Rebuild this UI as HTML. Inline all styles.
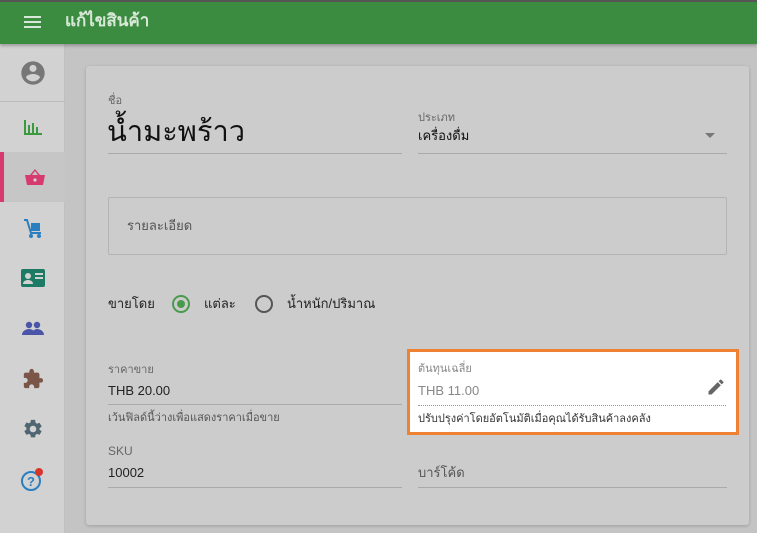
<!DOCTYPE html>
<html><head><meta charset="utf-8"><style>
*{margin:0;padding:0;box-sizing:border-box}
body{width:757px;height:533px;overflow:hidden;background:#c4c4c4;font-family:"Liberation Sans","Noto Sans CJK SC",sans-serif;position:relative;color:#222}
.hdr{position:absolute;left:0;top:0;width:757px;height:44px;background:#3b8c40;border-top:2px solid #555;box-shadow:0 2px 3px rgba(0,0,0,.25);z-index:2}
.hdr .t{position:absolute;left:65px;top:5px;color:#d8e8d8;font-size:17px;font-weight:bold}
.side{position:absolute;left:0;top:44px;width:65px;height:489px;background:#d2d2d2;border-right:1px solid #c0c0c0}
.ic{position:absolute;left:0;width:65px;height:50px;display:flex;align-items:center;justify-content:center}
.card{position:absolute;left:86px;top:66px;width:663px;height:459px;background:#cccccc;border-radius:3px;box-shadow:0 1px 3px rgba(0,0,0,.2)}
.a{position:absolute;white-space:nowrap}
.lbl{font-size:11px;color:#666}
.line{position:absolute;height:1px;background:#aaa}
</style></head><body>
<div class="hdr">
<svg style="position:absolute;left:24px;top:13px" width="17" height="14"><rect y="1" width="17" height="2" fill="#d8e8d8"/><rect y="6" width="17" height="2" fill="#d8e8d8"/><rect y="11" width="17" height="2" fill="#d8e8d8"/></svg>
<div class="t">แก้ไขสินค้า</div></div>
<div class="side">
<div class="ic" style="top:4px"><svg width="28" height="28" viewBox="0 0 24 24"><path fill="#777" d="M12 2C6.48 2 2 6.48 2 12s4.48 10 10 10 10-4.48 10-10S17.52 2 12 2zm0 3c1.66 0 3 1.34 3 3s-1.34 3-3 3-3-1.34-3-3 1.34-3 3-3zm0 14.2c-2.5 0-4.71-1.28-6-3.22.03-1.99 4-3.08 6-3.08 1.99 0 5.970 1.09 6 3.08-1.29 1.94-3.5 3.22-6 3.22z"/></svg></div>
<div style="position:absolute;left:0;top:57px;width:65px;height:1px;background:#bbb"></div>
<div class="ic" style="top:58px"><svg width="20" height="18" viewBox="0 0 20 18"><path fill="#3a9a40" d="M1 2h2v14H1zM5 7h2v9H5zM9 5h2v11H9zM13 9h2v7h-2zM1 15h18v2H1z"/></svg></div>
<div class="ic" style="top:108px;background:#c6c6c6;border-left:4px solid #d63a6f"><svg width="22" height="20" viewBox="0 0 22 20"><path fill="#d63a6f" d="M6 8l5-6 5 6h5l-2 10H3L1 8zM8 8h6l-3-4z"/><circle cx="11" cy="13" r="1.6" fill="#d2d2d2"/></svg></div>
<div class="ic" style="top:159px"><svg width="22" height="22" viewBox="0 0 22 22"><path fill="none" stroke="#2a7fc0" stroke-width="2" d="M2 3h3l4 13h10"/><rect x="9" y="6" width="9" height="8" fill="#2a7fc0"/><circle cx="9" cy="19" r="2" fill="#2a7fc0"/><circle cx="17" cy="19" r="2" fill="#2a7fc0"/></svg></div>
<div class="ic" style="top:209px"><svg width="24" height="18" viewBox="0 0 24 18"><rect width="24" height="18" rx="2" fill="#1d7a64"/><circle cx="7" cy="7" r="3" fill="#d2d2d2"/><path fill="#d2d2d2" d="M2 15c0-3 3-4 5-4s5 1 5 4zM14 4h8v2h-8zM14 8h8v2h-8z"/></svg></div>
<div class="ic" style="top:259px"><svg width="22" height="14" viewBox="0 0 22 14"><circle cx="7" cy="4" r="3.2" fill="#4a55a8"/><circle cx="15" cy="4" r="3.2" fill="#4a55a8"/><path fill="#4a55a8" d="M0 14c0-4 4-6 7-6s7 2 7 6zM10 14c0-3 2-6 5-6s7 2 7 6z"/></svg></div>
<div class="ic" style="top:310px"><svg width="22" height="22" viewBox="0 0 24 24"><path fill="#7a5548" d="M20.5 11H19V7c0-1.1-.9-2-2-2h-4V3.5a2.5 2.5 0 0 0-5 0V5H4c-1.1 0-2 .9-2 2v3.8h1.5c1.5 0 2.7 1.2 2.7 2.7S5 16.2 3.5 16.2H2V20c0 1.1.9 2 2 2h3.8v-1.5c0-1.5 1.2-2.7 2.7-2.7s2.7 1.200 2.7 2.7V22H17c1.1 0 2-.9 2-2v-4h1.5a2.5 2.5 0 0 0 0-5z"/></svg></div>
<div class="ic" style="top:360px"><svg width="22" height="22" viewBox="0 0 24 24"><path fill="#4f6570" d="M19.14 12.94c.04-.3.06-.61.06-.94s-.02-.64-.07-.94l2.03-1.58a.49.49 0 0 0 .12-.61l-1.92-3.32a.49.49 0 0 0-.59-.22l-2.39.96c-.5-.38-1.03-.7-1.62-.94l-.36-2.54A.48.48 0 0 0 13.920 2h-3.84c-.24 0-.43.17-.47.41l-.36 2.54c-.59.24-1.13.57-1.62.94l-2.39-.96a.49.49 0 0 0-.59.22L2.74 8.47c-.12.21-.08.47.12.61l2.03 1.58c-.05.3-.09.63-.09.94s.02.64.07.94l-2.03 1.58a.49.49 0 0 0-.12.61l1.92 3.32c.12.22.37.29.59.22l2.39-.96c.5.38 1.03.7 1.62.94l.36 2.54c.05.24.24.41.48.41h3.84c.24 0 .44-.17.47-.41l.36-2.54c.59-.24 1.13-.56 1.62-.94l2.39.96c.22.08.47 0 .59-.22l1.92-3.32c.12-.22.07-.47-.12-.61zM12 15.6A3.6 3.6 0 1 1 12 8.4a3.6 3.6 0 0 1 0 7.2z"/></svg></div>
<div class="ic" style="top:410px"><svg width="26" height="26" viewBox="0 0 26 26"><circle cx="11" cy="15" r="9" fill="none" stroke="#2a7fc0" stroke-width="2"/><text x="11" y="20" text-anchor="middle" font-size="13" font-weight="bold" fill="#2a7fc0" font-family="Liberation Sans">?</text><circle cx="19" cy="6" r="4" fill="#d8352a"/></svg></div>
</div>
<div class="card">
<div class="a lbl" style="left:22px;top:25px">ชื่อ</div>
<div class="a" style="left:21px;top:42px;font-size:29px;color:#111">น้ำมะพร้าว</div>
<div class="line" style="left:22px;top:87px;width:294px"></div>
<div class="a lbl" style="left:332px;top:42px">ประเภท</div>
<div class="a" style="left:332px;top:59px;font-size:13px;color:#111">เครื่องดื่ม</div>
<svg class="a" style="left:619px;top:67px" width="10" height="5"><path d="M0 0h10L5 5z" fill="#777"/></svg>
<div class="line" style="left:332px;top:87px;width:309px"></div>
<div class="a" style="left:22px;top:131px;width:619px;height:58px;border:1px solid #b4b4b4;border-radius:2px"></div>
<div class="a" style="left:41px;top:149px;font-size:13px;color:#555">รายละเอียด</div>
<div class="a" style="left:22px;top:227px;font-size:13px;color:#222">ขายโดย</div>
<div class="a" style="left:86px;top:229px;width:18px;height:18px;border:2px solid #4a9a4e;border-radius:50%"><div style="margin:3px;width:8px;height:8px;border-radius:50%;background:#4a9a4e"></div></div>
<div class="a" style="left:118px;top:227px;font-size:13px;color:#222">แต่ละ</div>
<div class="a" style="left:169px;top:229px;width:18px;height:18px;border:2px solid #555;border-radius:50%"></div>
<div class="a" style="left:201px;top:227px;font-size:13px;color:#222">น้ำหนัก/ปริมาณ</div>
<div class="a lbl" style="left:22px;top:294px">ราคาขาย</div>
<div class="a" style="left:22px;top:317px;font-size:13px;color:#222">THB 20.00</div>
<div class="line" style="left:22px;top:338px;width:294px"></div>
<div class="a" style="left:22px;top:342px;font-size:11px;color:#555">เว้นฟิลด์นี้ว่างเพื่อแสดงราคาเมื่อขาย</div>
<div class="a lbl" style="left:22px;top:378px;font-size:12px">SKU</div>
<div class="a" style="left:22px;top:399px;font-size:13px;color:#222">10002</div>
<div class="line" style="left:22px;top:421px;width:294px"></div>
<div class="a" style="left:321px;top:283px;width:332px;height:86px;background:#fff;border:3px solid #ef8132"></div>
<div class="a lbl" style="left:332px;top:293px;color:#888">ต้นทุนเฉลี่ย</div>
<div class="a" style="left:332px;top:317px;font-size:13px;color:#888">THB 11.00</div>
<svg class="a" style="left:620px;top:311px" width="20" height="20" viewBox="0 0 24 24"><path fill="#666" d="M3 17.25V21h3.75L17.81 9.94l-3.75-3.75L3 17.25zM20.71 7.04a1 1 0 0 0 0-1.41l-2.34-2.34a1 1 0 0 0-1.41 0l-1.83 1.83 3.75 3.75 1.83-1.83z"/></svg>
<div class="a" style="left:332px;top:339px;width:308px;border-top:1px dotted #999"></div>
<div class="a" style="left:332px;top:343px;font-size:11px;color:#333">ปรับปรุงค่าโดยอัตโนมัติเมื่อคุณได้รับสินค้าลงคลัง</div>
<div class="a" style="left:332px;top:396px;font-size:13px;color:#555">บาร์โค้ด</div>
<div class="line" style="left:332px;top:421px;width:309px"></div>
</div>
</body></html>
